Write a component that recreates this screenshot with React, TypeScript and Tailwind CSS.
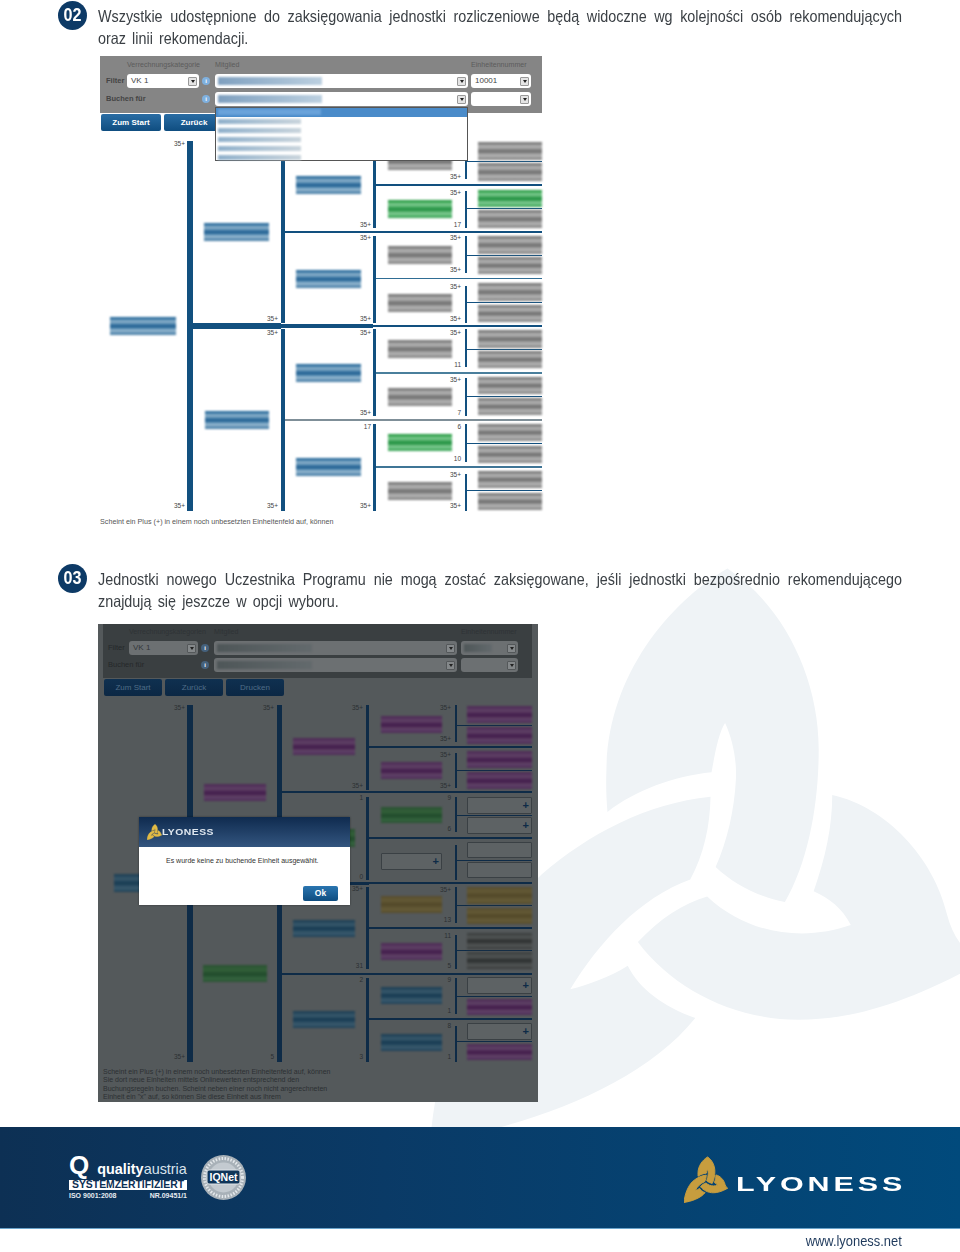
import React from "react";

type Tone = "blue" | "gray" | "green" | "purple" | "dgreen" | "gold" | "dgray" | "dblue" | "empty" | "plus";
type NodeT = [number, number, number, number, Tone];
type Line = [number, number, number, number, string?];
type Label = [number, number, string];

const toneClass: Record<Tone, string> = {
  blue: "blur-[1px] bg-[linear-gradient(180deg,#2c6c9c_0%,#2f6f9f_8%,#8fb3cc_24%,#5a8eb4_38%,#1a5a8e_50%,#3f7aa6_60%,#9abbd2_74%,#6e9bbb_86%,#3f77a2_100%)]",
  gray: "blur-[1px] bg-[linear-gradient(180deg,#777_0%,#7c7c7c_8%,#b4b4b4_24%,#999_38%,#6a6a6a_50%,#878787_60%,#b6b6b6_74%,#9d9d9d_86%,#808080_100%)]",
  green: "blur-[1px] bg-[linear-gradient(180deg,#2a9a45_0%,#2f9f4a_8%,#80cc92_24%,#52b06a_38%,#1f8f3f_50%,#3aa055_60%,#84cc95_74%,#5cb875_86%,#34a050_100%)]",
  purple: "blur-[1px] bg-[linear-gradient(180deg,#4e2c56_0%,#53325b_12%,#5f4266_28%,#4f2b57_42%,#401a4a_54%,#512f58_64%,#604367_78%,#553560_90%,#4c2b54_100%)]",
  dgreen: "blur-[1px] bg-[linear-gradient(180deg,#2a5233_0%,#336039_30%,#204a2b_55%,#35643f_80%,#2a5233_100%)]",
  gold: "blur-[1px] bg-[linear-gradient(180deg,#564c2e_0%,#645a36_25%,#524828_50%,#665c38_78%,#564c2c_100%)]",
  dgray: "blur-[1px] bg-[linear-gradient(180deg,#383c3c_0%,#515555_28%,#2b2e2e_50%,#525656_78%,#363939_100%)]",
  dblue: "blur-[1px] bg-[linear-gradient(180deg,#1a3d53_0%,#38586b_28%,#163a52_50%,#3b5b6e_78%,#1d4158_100%)]",
  empty: "bg-[#5d6264] border border-[#3a4044] rounded-[1px]",
  plus: "bg-[#5d6264] border border-[#3a4044] rounded-[1px] flex items-center justify-end pr-[2px] text-[11px] font-bold leading-none text-[#0e2b47]",
};

const Tree = ({ ox, oy, h, nodes, lines, labels, bar, labelClass }: { ox: number; oy: number; h: number; nodes: NodeT[]; lines: Line[]; labels: Label[]; bar: string; labelClass: string }) => (
  <div className="relative" style={{ height: h }}>
    {lines.map(([x1, y1, x2, y2, c], i) => (
      <div key={i} className="absolute" style={{ left: x1 - ox, top: y1 - oy, width: x2 - x1, height: y2 - y1, background: c ?? bar }} />
    ))}
    {nodes.map(([x, y, x2, y2, t], i) => (
      <div key={i} className={"absolute " + toneClass[t]} style={{ left: x - ox, top: y - oy, width: x2 - x, height: y2 - y }}>
        {t === "plus" ? "+" : null}
      </div>
    ))}
    {labels.map(([x, y, s], i) => (
      <div key={i} className={"absolute w-[30px] h-[8px] text-right text-[6.5px] leading-[8px] " + labelClass} style={{ left: x - ox - 30, top: y - oy - 4 }}>
        {s}
      </div>
    ))}
  </div>
);

const pair = (ys: [number, number][], x: number, x2: number, t: Tone | Tone[]): NodeT[] =>
  ys.map(([a, b], i) => [x, a, x2, b, Array.isArray(t) ? t[i] : t]);

const s1Nodes: NodeT[] = [
  [110, 317, 176, 335, "blue"],
  [204, 223, 269, 241, "blue"],
  [205, 411, 269, 429, "blue"],
  ...pair([[176, 194], [270, 288], [364, 382], [458, 476]], 296, 361, "blue"),
  ...pair(
    [[153, 170], [200, 218], [246, 264], [294, 312], [340, 358], [388, 406], [434, 451], [482, 500]],
    388, 452,
    ["gray", "green", "gray", "gray", "gray", "gray", "green", "gray"]
  ),
  ...pair(
    [[142, 160], [163, 181], [190, 207], [210, 228], [236, 254], [257, 274], [283, 301], [305, 322], [330, 348], [351, 368], [377, 394], [398, 415], [424, 441], [446, 463], [471, 488], [493, 510]],
    478, 542,
    ["gray", "gray", "green", "gray", "gray", "gray", "gray", "gray", "gray", "gray", "gray", "gray", "gray", "gray", "gray", "gray"]
  ),
];
const s1Lines: Line[] = [
  [187, 141, 193, 511],
  [281, 141, 285, 323], [281, 329, 285, 511],
  [373, 141, 376, 228], [373, 236, 376, 323], [373, 329, 376, 416], [373, 424, 376, 511],
  [465, 141, 467, 179], [465, 191, 467, 228], [465, 236, 467, 273], [465, 286, 467, 323], [465, 329, 467, 367], [465, 378, 467, 416], [465, 424, 467, 462], [465, 474, 467, 511],
  [193, 323, 281, 329], [281, 324, 373, 328], [373, 325, 542, 327],
  [285, 231, 542, 233], [285, 419, 542, 421, "#7f8f98"],
  [376, 184, 542, 186], [376, 278, 542, 279, "#2f6d94"], [376, 372, 542, 374, "#4a7f9c"], [376, 466, 542, 468, "#3f7596"],
  [467, 161, 542, 162], [467, 208, 542, 209], [467, 255, 542, 256], [467, 302, 542, 303], [467, 349, 542, 350], [467, 396, 542, 397], [467, 443, 542, 444], [467, 490, 542, 491],
];
const s1Labels: Label[] = [
  [185, 144, "35+"], [185, 506, "35+"],
  [278, 319, "35+"], [278, 333, "35+"], [278, 506, "35+"],
  [371, 225, "35+"], [371, 238, "35+"], [371, 319, "35+"], [371, 333, "35+"], [371, 413, "35+"], [371, 427, "17"], [371, 506, "35+"],
  [461, 177, "35+"], [461, 193, "35+"], [461, 225, "17"], [461, 238, "35+"], [461, 270, "35+"], [461, 287, "35+"], [461, 319, "35+"], [461, 333, "35+"], [461, 365, "11"], [461, 380, "35+"], [461, 413, "7"], [461, 427, "6"], [461, 459, "10"], [461, 475, "35+"], [461, 506, "35+"],
];

const s2Nodes: NodeT[] = [
  [114, 874, 160, 892, "dblue"],
  [204, 784, 266, 801, "purple"],
  [203, 965, 267, 982, "dgreen"],
  [293, 738, 355, 755, "purple"],
  [293, 829, 355, 847, "dgreen"],
  [293, 920, 355, 937, "dblue"],
  [293, 1011, 355, 1028, "dblue"],
  ...pair(
    [[716, 733], [762, 779], [807, 823], [853, 870], [896, 913], [943, 960], [987, 1004], [1034, 1051]],
    381, 442,
    ["purple", "purple", "dgreen", "plus", "gold", "purple", "dblue", "dblue"]
  ),
  ...pair(
    [[706, 723], [727, 744], [751, 768], [772, 789], [797, 814], [817, 834], [842, 858], [862, 878], [887, 904], [908, 924], [933, 949], [952, 969], [977, 994], [999, 1015], [1023, 1040], [1044, 1060]],
    467, 532,
    ["purple", "purple", "purple", "purple", "plus", "plus", "empty", "empty", "gold", "gold", "dgray", "dgray", "plus", "purple", "plus", "purple"]
  ),
];
const s2Lines: Line[] = [
  [187, 705, 193, 1062],
  [277, 705, 282, 1062],
  [366, 705, 369, 790], [366, 797, 369, 880], [366, 887, 369, 969], [366, 978, 369, 1062],
  [455, 705, 457, 742], [455, 753, 457, 788], [455, 797, 457, 832], [455, 845, 457, 880], [455, 887, 457, 923], [455, 935, 457, 969], [455, 978, 457, 1014], [455, 1026, 457, 1062],
  [193, 882, 277, 886], [282, 882, 369, 885], [369, 882, 532, 884],
  [282, 791, 532, 793], [282, 973, 532, 975],
  [369, 746, 532, 748], [369, 837, 532, 839], [369, 927, 532, 929], [369, 1018, 532, 1020],
  [457, 725, 532, 726], [457, 770, 532, 771], [457, 815, 532, 816], [457, 860, 532, 861], [457, 905, 532, 906], [457, 950, 532, 951], [457, 996, 532, 997], [457, 1041, 532, 1042],
];
const s2Labels: Label[] = [
  [185, 708, "35+"], [185, 1057, "35+"],
  [274, 708, "35+"], [274, 1057, "5"],
  [363, 708, "35+"], [363, 786, "35+"], [363, 798, "1"], [363, 877, "0"], [363, 889, "35+"], [363, 966, "31"], [363, 980, "2"], [363, 1057, "3"],
  [451, 708, "35+"], [451, 739, "35+"], [451, 755, "35+"], [451, 786, "35+"], [451, 798, "9"], [451, 829, "6"], [451, 890, "35+"], [451, 920, "13"], [451, 936, "11"], [451, 966, "5"], [451, 980, "9"], [451, 1011, "1"], [451, 1026, "8"], [451, 1057, "1"],
];

const P_TOP = "M880 25 C 700 130 525 350 522 620 C 520 670 522 710 525 745 C 610 680 720 640 833 628 C 845 560 855 510 873 482 C 895 530 908 590 905 650 C 900 740 880 830 845 908 C 900 960 970 995 1050 1012 C 1120 890 1150 720 1150 560 C 1150 340 1040 130 880 25 Z";
const P_LEFT = "M830 700 C 640 720 470 810 330 930 C 150 1100 30 1400 0 1720 C 280 1680 620 1560 785 1355 C 690 1320 620 1270 585 1200 C 530 1235 470 1255 415 1270 C 500 1130 620 1000 770 945 C 810 870 828 790 830 700 Z";
const P_RIGHT = "M1190 695 C 1350 730 1490 880 1530 1050 C 1545 1110 1580 1160 1630 1190 C 1400 1320 1230 1360 1090 1360 C 900 1360 720 1270 615 1130 C 680 1060 750 1015 820 995 C 900 1070 1000 1105 1100 1105 C 1150 1105 1200 1095 1245 1080 C 1220 1030 1180 1000 1135 980 C 1170 880 1190 790 1190 695 Z";

const Trefoil = ({ className, fill }: { className: string; fill: string }) => (
  <svg viewBox="0 0 1640 1730" className={className}>
    <g fill={fill} stroke={fill} strokeWidth="36" strokeLinejoin="round">
      <path d={P_TOP} />
      <path d={P_LEFT} />
      <path d={P_RIGHT} />
    </g>
  </svg>
);

const Para = ({ n, children }: { n: string; children: React.ReactNode }) => (
  <div className="flex gap-[11px] pl-[58px]">
    <div className="flex h-[29px] w-[29px] shrink-0 items-center justify-center rounded-full bg-[#0d3a66] text-[19px] font-bold text-white">
      <span className="scale-x-[0.85]">{n}</span>
    </div>
    <div className="mt-[4px] w-[804px]">
      <p className="w-[924.14px] origin-left scale-x-[0.87] text-justify text-[16.5px] leading-[22px] text-[#3b4045] [word-spacing:2.5px]">{children}</p>
    </div>
  </div>
);

const Arrow = ({ dark }: { dark?: boolean }) => (
  <div className={"flex h-[9px] w-[9px] shrink-0 items-center justify-center rounded-[1px] border " + (dark ? "border-[#54585a] bg-[#84888a]" : "border-[#999] bg-[#e4e4e4]")}>
    <div className="h-0 w-0 border-x-[2.5px] border-t-[3px] border-x-transparent border-t-[#222]" />
  </div>
);

const Smear = ({ w, dark }: { w: string; dark?: boolean }) => (
  <div className={w + " h-[8px] blur-[1px] " + (dark ? "bg-[linear-gradient(90deg,#4e5658,#636a6d)]" : "bg-[linear-gradient(90deg,#7fa0bf,#bcd0e0)]")} />
);

const Field = ({ text, smear, dark }: { text?: string; smear?: string; dark?: boolean }) => (
  <div className={"flex h-[14px] items-center justify-between rounded-[3px] pl-[3px] pr-[2px] text-[8px] " + (dark ? "bg-[#6c7072] text-[#33373a]" : "bg-white text-[#444]")}>
    {smear ? <Smear w={smear} dark={dark} /> : <span className="pl-[1px]">{text}</span>}
    <Arrow dark={dark} />
  </div>
);

const Info = ({ dark }: { dark?: boolean }) => (
  <div className="flex items-center pl-[3px]">
    <div className={"flex h-[8px] w-[8px] items-center justify-center rounded-full text-[6px] font-bold text-white " + (dark ? "bg-[#45617c]" : "bg-[#7fb0de]")}>i</div>
  </div>
);

const Btn = ({ children, dark, w }: { children: string; dark?: boolean; w: string }) => (
  <div className={w + " flex h-[17px] items-center justify-center rounded-[2px] text-[8px] " + (dark ? "bg-[linear-gradient(180deg,#0f3050,#0c2844)] text-[#4f6d88]" : "bg-[linear-gradient(180deg,#2a6da4,#0f4d80)] font-bold text-white")}>
    {children}
  </div>
);

const S1COLS = "grid grid-cols-[27px_72px_16px_256px_60px] gap-x-0";
const S2COLS = "grid grid-cols-[26px_69px_16px_247px_57px]";

const Shot1 = () => (
  <div className="relative ml-[100px] mt-[7px] h-[475px] w-[442px] bg-white">
    <div className="h-[57px] bg-[#858585] text-[7.1px]">
      <div className={S1COLS + " h-[18px] items-center text-[#5c5c5c]"}>
        <span />
        <span className="whitespace-nowrap">Verrechnungskategorie</span>
        <span />
        <span>Mitglied</span>
        <span className="whitespace-nowrap">Einheitennummer</span>
      </div>
      <div className={S1COLS + " items-center"}>
        <span className="pl-[6px] text-[7.5px] font-bold text-[#444]">Filter</span>
        <Field text="VK 1" />
        <Info />
        <div className="pr-[3px]"><Field smear="w-[104px]" /></div>
        <Field text="10001" />
      </div>
      <div className={S1COLS + " mt-[4px] items-center"}>
        <span className="whitespace-nowrap pl-[6px] text-[7.5px] font-bold text-[#444]">Buchen für</span>
        <span />
        <Info />
        <div className="pr-[3px]"><Field smear="w-[104px]" /></div>
        <Field />
      </div>
    </div>
    <div className="ml-[1px] mt-[1px] flex gap-[3px]">
      <Btn w="w-[60px]">Zum Start</Btn>
      <Btn w="w-[60px]">Zurück</Btn>
      <Btn w="w-[60px]">Drucken</Btn>
    </div>
    <Tree ox={100} oy={131} h={381} nodes={s1Nodes} lines={s1Lines} labels={s1Labels} bar="#12507f" labelClass="text-[#444]" />
    <p className="pt-[5px] text-[7.2px] leading-[10px] text-[#555]">Scheint ein Plus (+) in einem noch unbesetzten Einheitenfeld auf, können</p>

    <div className="absolute left-[115px] top-[51px] flex h-[54px] w-[253px] flex-col border border-[#555] bg-white">
      <div className="h-[9px] bg-[#4a8bc9] pl-[2px] pt-[1px]">
        <div className="h-[6px] w-[103px] bg-[#6aa3da] blur-[1px]" />
      </div>
      <div className="flex flex-col gap-[4px] pl-[2px] pt-[2px]">
        {[0, 1, 2, 3, 4].map((i) => (
          <div key={i} className="h-[5px] w-[83px] bg-[linear-gradient(90deg,#8fb0cb,#c9d4dc)] blur-[0.8px]" />
        ))}
      </div>
    </div>
  </div>
);

const Shot2 = () => (
  <div className="relative ml-[98px] mt-[12px] h-[478px] w-[440px] overflow-hidden bg-[#54595b]">
    <div className="ml-[5px] h-[54px] w-[429px] bg-[#3a3f41] text-[7.1px]">
      <div className={S2COLS + " h-[17px] items-center text-[#2f3336]"}>
        <span />
        <span className="whitespace-nowrap">Verrechnungskategorien</span>
        <span />
        <span>Mitglied</span>
        <span className="whitespace-nowrap">Einheitennummer</span>
      </div>
      <div className={S2COLS + " items-center"}>
        <span className="pl-[5px] text-[7.5px] text-[#25282a]">Filter</span>
        <Field text="VK 1" dark />
        <Info dark />
        <div className="pr-[4px]"><Field smear="w-[95px]" dark /></div>
        <Field smear="w-[28px]" dark />
      </div>
      <div className={S2COLS + " mt-[3px] items-center"}>
        <span className="whitespace-nowrap pl-[5px] text-[7.5px] text-[#25282a]">Buchen für</span>
        <span />
        <Info dark />
        <div className="pr-[4px]"><Field smear="w-[95px]" dark /></div>
        <Field dark />
      </div>
    </div>
    <div className="ml-[6px] mt-[1px] flex gap-[3px]">
      <Btn w="w-[58px]" dark>Zum Start</Btn>
      <Btn w="w-[58px]" dark>Zurück</Btn>
      <Btn w="w-[58px]" dark>Drucken</Btn>
    </div>
    <Tree ox={98} oy={696} h={367} nodes={s2Nodes} lines={s2Lines} labels={s2Labels} bar="#0e2b47" labelClass="text-[#2b3033]" />
    <p className="ml-[5px] pt-[5px] text-[7px] leading-[8.4px] text-[#2c3033]">
      Scheint ein Plus (+) in einem noch unbesetzten Einheitenfeld auf, können<br />
      Sie dort neue Einheiten mittels Onlinewerten entsprechend den<br />
      Buchungsregeln buchen. Scheint neben einer noch nicht angerechneten<br />
      Einheit ein "x" auf, so können Sie diese Einheit aus ihrem
    </p>

    <div className="absolute left-[41px] top-[193px] flex h-[88px] w-[211px] flex-col bg-white shadow-[0_0_2px_rgba(0,0,0,0.4)]">
      <div className="flex h-[30px] items-center bg-[linear-gradient(180deg,#0f2b4f,#33557f)] pl-[8px]">
        <Trefoil className="h-[16px] w-[15px]" fill="#e2bb45" />
        <span className="origin-left scale-x-[1.22] text-[8.5px] font-bold leading-none tracking-[0.4px] text-[#dfe7ef]">LYONESS</span>
      </div>
      <div className="pt-[9px] pl-[27px] text-[7px] leading-[10px] text-[#333]">Es wurde keine zu buchende Einheit ausgewählt.</div>
      <div className="mt-auto flex justify-end pb-[4px] pr-[12px]">
        <div className="flex h-[15px] w-[35px] items-center justify-center rounded-[2px] bg-[linear-gradient(180deg,#2a75b0,#0e4d80)] text-[8.5px] font-bold text-white">Ok</div>
      </div>
    </div>
  </div>
);

const Footer = () => (
  <>
    <div className="mt-[25px] flex h-[102px] justify-between border-b border-[#6ba4cb] bg-[linear-gradient(90deg,#0d3054,#0a3a66_40%,#014a7c)]">
      <div className="flex pl-[69px] pt-[29px]">
        <div className="flex w-[118px] flex-col">
          <div className="flex h-[24px] items-start">
            <span className="-mt-[3px] text-[26px] font-bold leading-[24px] text-white">Q</span>
            <span className="ml-[8px] mt-[5px] whitespace-nowrap text-[14.4px] leading-[16px] text-[#d9e3ec]"><b className="text-white">quality</b>austria</span>
          </div>
          <div className="flex h-[10px] items-center justify-center whitespace-nowrap bg-white text-[10.4px] font-bold leading-none text-[#0d3054]">SYSTEMZERTIFIZIERT</div>
          <div className="mt-[1px] flex justify-between text-[7px] font-bold leading-[10px] text-[#e6ecf2]">
            <span>ISO 9001:2008</span>
            <span>NR.09451/1</span>
          </div>
        </div>
        <svg viewBox="0 0 45 45" className="-mt-[1px] ml-[14px] h-[45px] w-[45px]">
          <circle cx="22.5" cy="22.5" r="22.5" fill="#a8b1b8" />
          <circle cx="22.5" cy="22.5" r="19" fill="none" stroke="#e4e8eb" strokeWidth="3" strokeDasharray="1.5 1.5" />
          <circle cx="22.5" cy="22.5" r="15" fill="#c3cad0" />
          <rect x="6" y="15" width="33" height="14" rx="2" fill="#0f3558" stroke="#dfe4e8" strokeWidth="1" />
          <text x="22.5" y="26" textAnchor="middle" fontSize="10.5" fontWeight="700" fill="#fff" fontFamily="Liberation Sans, sans-serif">IQNet</text>
        </svg>
      </div>
      <div className="flex pr-[57px] pt-[29px]">
        <Trefoil className="h-[47px] w-[44px]" fill="#c79d3e" />
        <div className="ml-[8px] flex h-[54px] w-[167px] items-center">
          <span className="origin-left scale-x-[1.45] text-[21px] font-bold leading-none tracking-[2.7px] text-white">LYONESS</span>
        </div>
      </div>
    </div>
    <div className="flex h-[23px] items-center justify-end pr-[58px]">
      <span className="origin-right scale-x-[0.86] text-[15px] leading-none text-[#1f3a5c]">www.lyoness.net</span>
    </div>
  </>
);

export default function App() {
  return (
    <div className="relative h-[1252px] w-[960px] overflow-hidden bg-white font-['Liberation_Sans',sans-serif]">
      <svg viewBox="0 0 1568 1686" className="absolute left-[430px] top-[560px] h-[570px] w-[530px]">
        <path d={P_TOP} fill="#eff3f6" />
        <path d={P_LEFT} fill="#eff3f6" />
        <path d={P_RIGHT} fill="#eff3f6" />
      </svg>
      <div className="relative flex flex-col pt-[1px]">
        <Para n="02">
          Wszystkie udostępnione do zaksięgowania jednostki rozliczeniowe będą widoczne wg kolejności osób rekomendujących oraz linii rekomendacji.
        </Para>
        <Shot1 />
        <div className="mt-[33px]">
          <Para n="03">
            Jednostki nowego Uczestnika Programu nie mogą zostać zaksięgowane, jeśli jednostki bezpośrednio rekomendującego znajdują się jeszcze w opcji wyboru.
          </Para>
        </div>
        <Shot2 />
        <Footer />
      </div>
    </div>
  );
}
